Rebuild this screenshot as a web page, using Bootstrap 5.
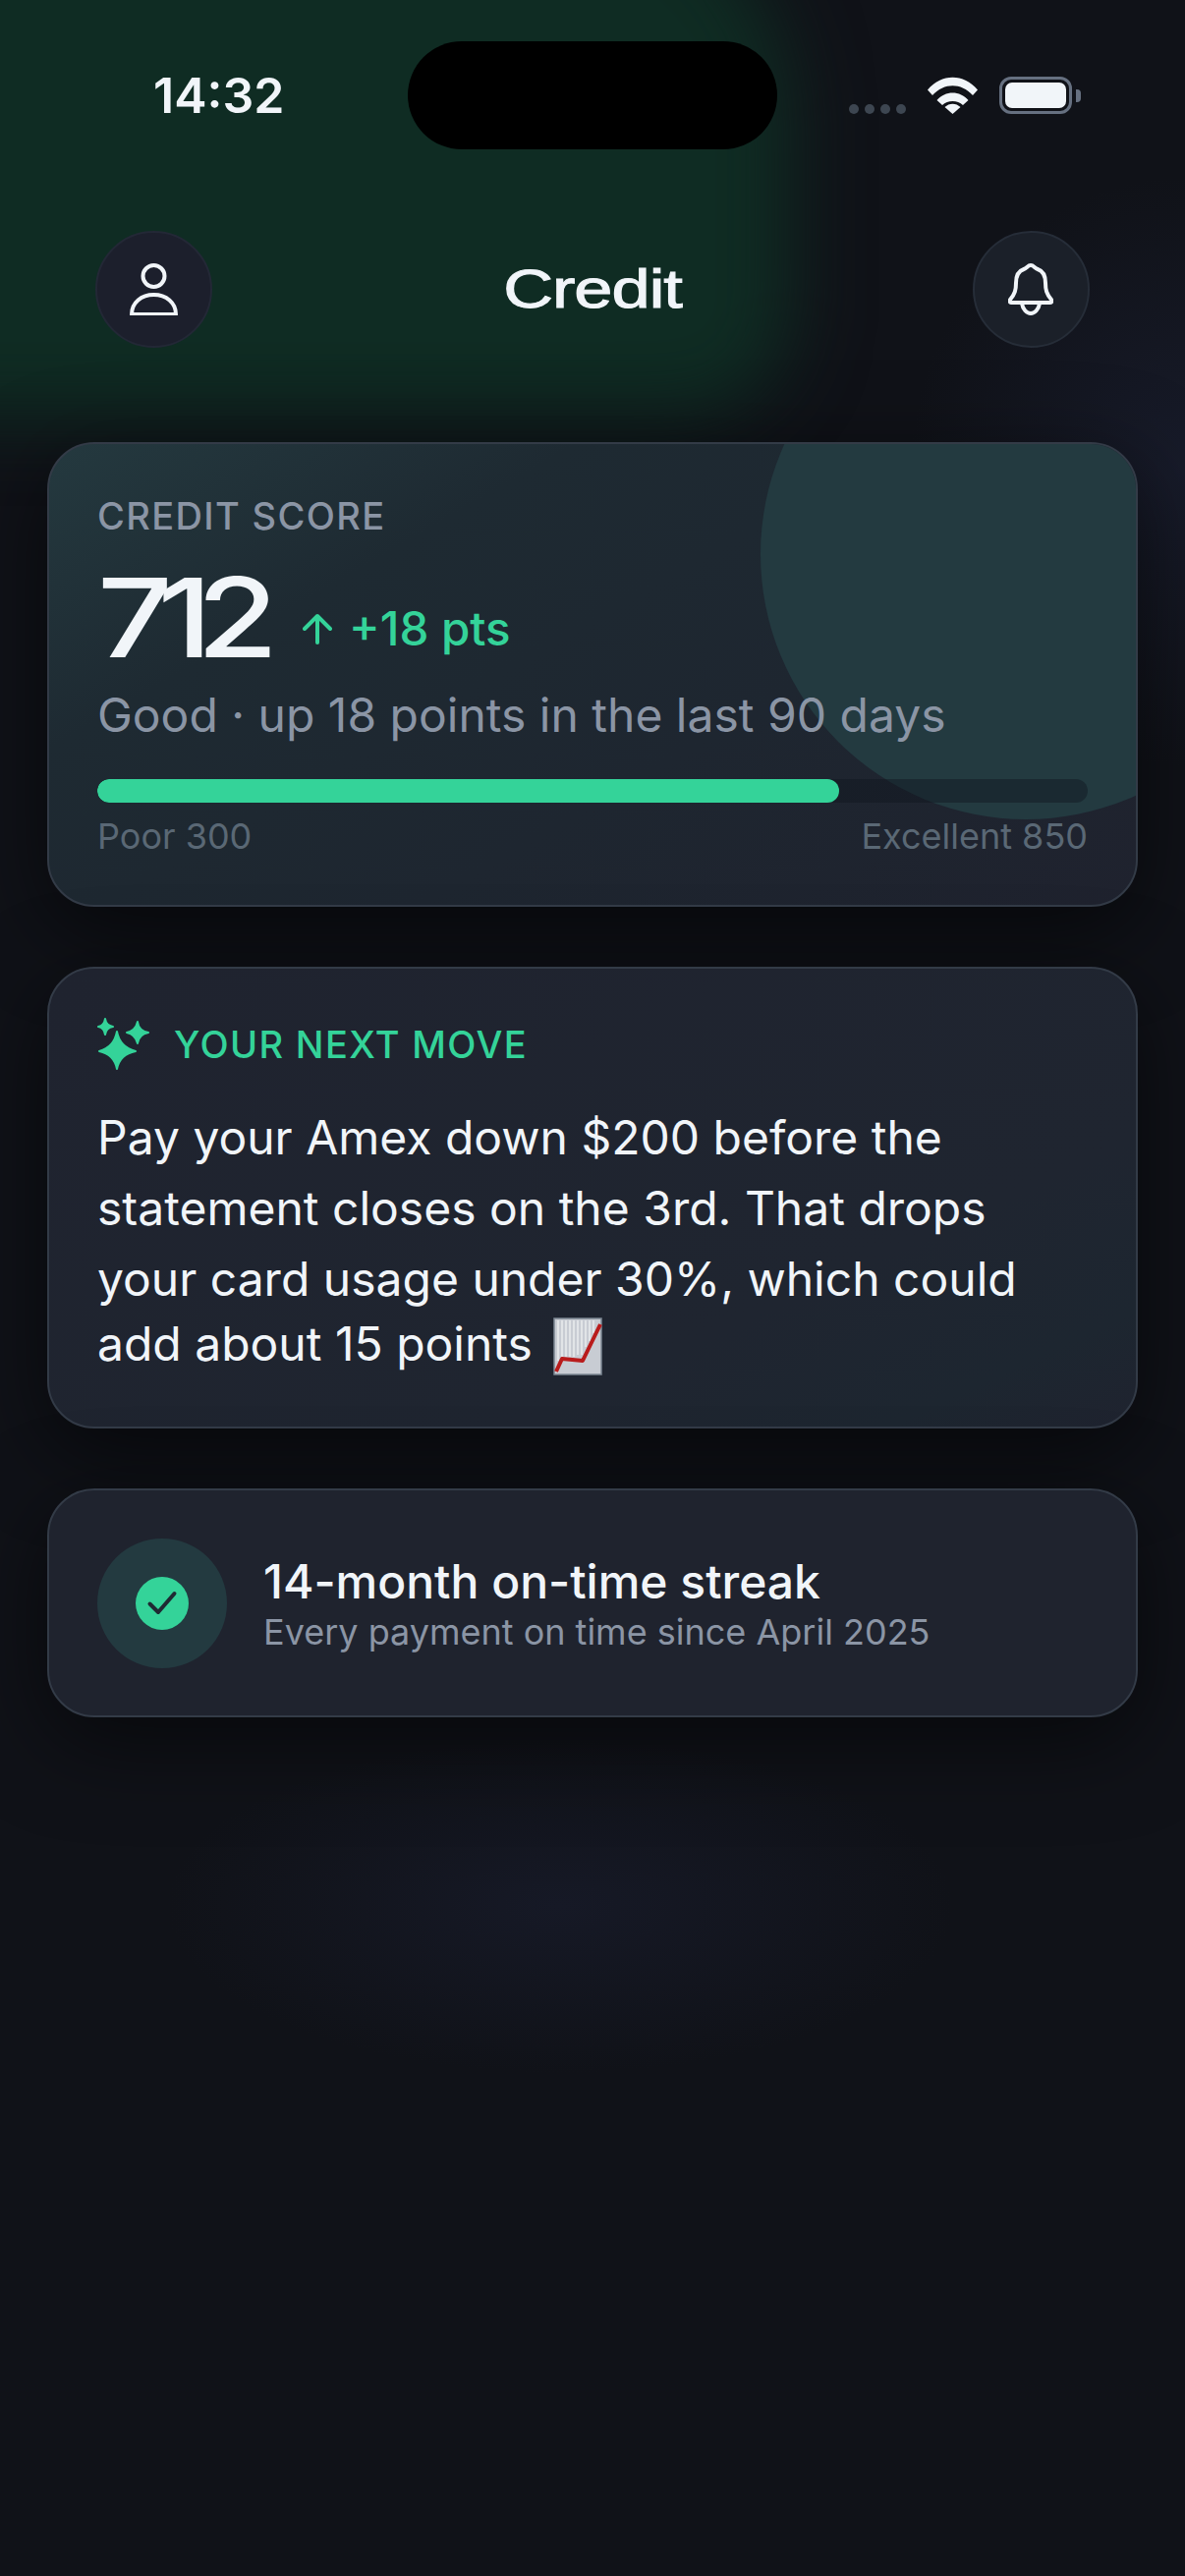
<!DOCTYPE html>
<html lang="en">
<head>
  <meta charset="UTF-8">
  <meta name="viewport" content="width=device-width, initial-scale=1.0">
  <title>Credit</title>
  <link href="https://cdn.jsdelivr.net/npm/bootstrap@5.3.0/dist/css/bootstrap.min.css" rel="stylesheet">
  <style>
    body { background: #101218; font-family: "Inter", "Liberation Sans", sans-serif; color: #f1f5f9; }
    .screen {
      position: relative; z-index: 0;
      width: 1206px; height: 2622px; overflow: hidden;
      background:
        radial-gradient(ellipse 400px 170px at 570px 1940px, rgba(28,32,52,.5), rgba(28,32,52,0) 100%),
        radial-gradient(ellipse 280px 300px at 1206px 480px, rgba(26,30,48,.75), rgba(26,30,48,0) 100%),
        #101218;
    }
    .green-glow { position: absolute; z-index: -1; left: -120px; top: -120px; width: 925px; height: 545px; background: #0f2c23; border-radius: 0 240px 110px 0; filter: blur(38px); }
    .status-row { padding: 42px 106px 0 156px; height: 152px; }
    .clock { width: 259px; font-size: 50px; font-weight: 600; line-height: 110px; }
    .island { width: 376px; height: 110px; background: #000; border-radius: 55px; }
    .status-icons { height: 38px; gap: 22px; }
    .sig-dots { gap: 6px; }
    .sig-dots i { display: block; width: 10px; height: 10px; border-radius: 50%; background: #3d4651; }
    .batt { width: 74px; height: 38px; border: 3px solid #667080; border-radius: 12px; padding: 3px; }
    .batt i { display: block; height: 100%; background: #f1f5f9; border-radius: 7px; }
    .batt-nub { width: 5px; height: 13px; background: #667080; border-radius: 0 4px 4px 0; }
    .top-row { padding: 0 97px; margin-top: 82px; height: 120px; }
    .round-btn { width: 119px; height: 119px; background: #1c1f2c; border: 2px solid #232836; }
    .bell-btn { background: #1b2029; border-color: #262d38; }
    .page-title { font-family: "Liberation Sans", sans-serif; font-size: 55px; font-weight: 400; margin: 0; transform: scaleX(1.28); -webkit-text-stroke: 1px #f1f5f9; letter-spacing: -.8px; line-height: 60px; }
    .stack { padding: 0 48px; margin-top: 96px; gap: 61px; }
    .glass {
      background: #1f232e; border: 2px solid #333b47; border-radius: 48px;
      box-shadow: 0 24px 90px rgba(0,0,0,.55); color: inherit;
    }
    .glass-score { background: linear-gradient(150deg, #24393f 0%, #1e2a32 28%, #1e2630 62%, #1f222e 100%); }
    .glass-move { background: linear-gradient(155deg, #1f232f 0%, #1f2530 70%, #1d2630 88%, #1f232f 100%); }
    .glass .card-body { padding: 51px 49px 48px; position: relative; }
    .score-blob { position: absolute; top: -158px; right: -158px; width: 540px; height: 540px; background: #233a40; border-radius: 50%; }
    .eyebrow { font-size: 38px; line-height: 44px; letter-spacing: 1.35px; font-weight: 500; color: #8b95a5; position: relative; }
    .score-row { margin-top: 25px; position: relative; }
    .score-num { width: 173px; font-size: 112px; font-weight: 500; line-height: 112px; letter-spacing: -13px; color: #f1f5f9; white-space: nowrap; transform: scaleX(1.2); transform-origin: left center; }
    .score-up { font-size: 47.5px; line-height: 64px; font-weight: 500; color: #34d399; margin: 24px 0 0 36px; gap: 17px; }
    .sub-line { font-size: 48px; line-height: 64px; color: #8b95a5; margin-top: 12px; position: relative; }
    .score-track { height: 24px; margin-top: 33px; background: rgba(16,22,30,.45); border-radius: 12px; position: relative; }
    .score-track .progress-bar { background: #34d399; border-radius: 12px; }
    .scale-row { font-size: 36px; line-height: 44px; color: #5a6875; margin-top: 12px; position: relative; }
    .glass-move .card-body { padding: 49px 49px 48px; }
    .move-head { font-size: 38px; line-height: 44px; letter-spacing: 1.35px; font-weight: 500; color: #34d399; gap: 25px; }
    .move-text { font-size: 48px; line-height: 72px; margin: 32px 0 0; }
    .last-line { display: block; margin-top: -6px; }
    .chart-emoji { vertical-align: -15px; margin-left: 8px; }
    .glass-streak .card-body { padding: 49px 49px 48px; gap: 37px; }
    .halo { width: 132px; height: 132px; background: #233a40; }
    .streak-title { font-size: 48px; line-height: 56px; font-weight: 500; }
    .streak-sub { font-size: 36px; line-height: 44px; color: #8b95a5; padding-top: 1px; }
  </style>
</head>
<body class="m-0">
  <div class="screen">
    <div class="green-glow"></div>
    <div class="status-row d-flex">
      <div class="clock">14:32</div>
      <div class="island"></div>
      <div class="status-icons d-flex align-items-end align-self-center ms-auto">
        <div class="sig-dots d-flex"><i></i><i></i><i></i><i></i></div>
        <svg width="51" height="38" viewBox="0 0 51 38" fill="#f1f5f9">
          <path d="M0 13.5 C14 -3.5 37 -3.5 51 13.5 L46 19 C34 6 17 6 5 19 Z"/>
          <path d="M9.5 24 C18 14 33 14 41.5 24 L36 29 C30.5 23.5 20.5 23.5 15 29 Z"/>
          <path d="M17.5 31 C22 26.5 29 26.5 33.5 31 L25.5 38 Z"/>
        </svg>
        <div class="d-flex align-items-center">
          <div class="batt"><i></i></div>
          <div class="batt-nub ms-1"></div>
        </div>
      </div>
    </div>

    <div class="top-row d-flex justify-content-between align-items-center">
      <div class="round-btn rounded-circle d-flex align-items-center justify-content-center">
        <svg width="49" height="53" viewBox="0 0 49 53" fill="none" stroke="#f1f5f9" stroke-width="4" stroke-linejoin="round">
          <circle cx="24.5" cy="13" r="11"/>
          <path d="M2 52 C2 40 12 32 24.5 32 C37 32 47 40 47 52 Z"/>
        </svg>
      </div>
      <h1 class="page-title">Credit</h1>
      <div class="round-btn bell-btn rounded-circle d-flex align-items-center justify-content-center">
        <svg width="46" height="53" viewBox="0 0 46 53" fill="none" stroke="#f1f5f9" stroke-width="4" stroke-linejoin="round" stroke-linecap="round">
          <path d="M23 2 C26 2 27 5 30 6 C36 8 38 13 38 20 C38 27 39 31 44 37 Q45 40 43 40 H3 Q1 40 2 37 C7 31 8 27 8 20 C8 13 10 8 16 6 C19 5 20 2 23 2 Z"/>
          <path d="M14 41 C15 47 19 51 23 51 C27 51 31 47 32 41"/>
        </svg>
      </div>
    </div>

    <div class="stack d-flex flex-column">
      <div class="card glass glass-score overflow-hidden">
        <div class="card-body">
          <div class="score-blob"></div>
          <div class="eyebrow">CREDIT SCORE</div>
          <div class="score-row d-flex align-items-center">
            <div class="score-num">712</div>
            <div class="score-up d-flex align-items-center">
              <svg width="30" height="32" viewBox="0 0 30 32" fill="none" stroke="#34d399" stroke-width="4" stroke-linecap="round" stroke-linejoin="round"><path d="M15 30 V3 M2 16 L15 3 L28 16"/></svg>
              <span>+18 pts</span>
            </div>
          </div>
          <div class="sub-line">Good · up 18 points in the last 90 days</div>
          <div class="progress score-track">
            <div class="progress-bar" style="width: 74.9%"></div>
          </div>
          <div class="scale-row d-flex justify-content-between">
            <span>Poor 300</span>
            <span>Excellent 850</span>
          </div>
        </div>
      </div>

      <div class="card glass glass-move">
        <div class="card-body">
          <div class="move-head d-flex align-items-center">
            <svg width="53" height="55" viewBox="0 0 53 55" fill="#34d399" stroke="#34d399" stroke-width="2" stroke-linejoin="round">
              <path d="M20 15 Q23 31 39 35 Q23 38 20 53 Q17 38 2 35 Q17 31 20 15 Z"/>
              <path d="M8 2 Q9 9 16 10 Q9 11 8 18 Q7 11 1 10 Q7 9 8 2 Z"/>
              <path d="M41 5 Q42 14 52 16 Q42 18 41 27 Q39 18 30 16 Q39 14 41 5 Z"/>
            </svg>
            <span>YOUR NEXT MOVE</span>
          </div>
          <p class="move-text">Pay your Amex down $200 before the<br>statement closes on the 3rd. That drops<br>your card usage under 30%, which could<span class="last-line">add about 15 points <svg class="chart-emoji" width="50" height="59" viewBox="0 0 50 59"><rect x="1" y="1" width="48" height="57" fill="#c8ccd3" stroke="#7c8792" stroke-width="1.5"/><path d="M5 3 V44 M9 3 V40 M13 3 V40 M17 3 V40 M21 3 V40 M25 3 V38 M29 3 V38 M33 3 V30 M37 3 V24 M41 3 V16" stroke="#e9ebee" stroke-width="1.5"/><path d="M3 55 L9 42 L30 44 L48 7" fill="none" stroke="#b91c1c" stroke-width="4" stroke-linejoin="round"/></svg></span></p>
        </div>
      </div>

      <div class="card glass glass-streak">
        <div class="card-body d-flex flex-row align-items-center">
          <div class="halo rounded-circle d-flex align-items-center justify-content-center flex-shrink-0">
            <svg width="54" height="54" viewBox="0 0 54 54">
              <circle cx="27" cy="27" r="27" fill="#34d399"/>
              <path d="M14.5 27.5 L23 36 L39.5 17" fill="none" stroke="#1f2a33" stroke-width="4" stroke-linecap="round" stroke-linejoin="round"/>
            </svg>
          </div>
          <div>
            <div class="streak-title">14-month on-time streak</div>
            <div class="streak-sub">Every payment on time since April 2025</div>
          </div>
        </div>
      </div>
    </div>
  </div>
</body>
</html>
